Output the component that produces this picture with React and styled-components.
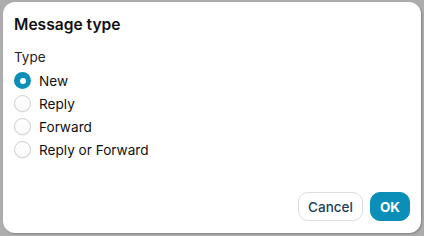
import React, { useState } from "react";
import styled, { createGlobalStyle } from "styled-components";

const Global = createGlobalStyle`
  html, body { margin: 0; padding: 0; }
  body { background: #adadad; font-family: Inter, "Noto Sans", sans-serif; }
  #root { width: 424px; height: 236px; }
`;

const Page = styled.div`
  width: 424px;
  height: 236px;
  box-sizing: border-box;
  padding: 2px 3px 3px 3px;
  display: flex;
`;

const Dialog = styled.div`
  flex: 1;
  background: #fff;
  border-radius: 12px;
  box-shadow: 1px 1px 2px rgba(0,0,0,0.25);
  display: flex;
  flex-direction: column;
  padding: 13px 11px 12px 11px;
  box-sizing: border-box;
`;

const Title = styled.h1`
  margin: 0;
  font-size: 15.6px;
  font-weight: 600;
  color: #111;
  line-height: 20px;
`;

const Body = styled.div`
  flex: 1;
  display: flex;
  flex-direction: column;
  margin-top: 14px;
`;

const Label = styled.div`
  font-size: 13.5px;
  color: #222;
  line-height: 17px;
  margin-bottom: 3px;
`;

const Option = styled.label`
  display: flex;
  align-items: center;
  gap: 8px;
  height: 23px;
  font-size: 13.6px;
  color: #111;
  cursor: pointer;
`;

const Circle = styled.span`
  width: 17px;
  height: 17px;
  border-radius: 50%;
  box-sizing: border-box;
  flex: none;
  background: ${(p) => (p.$on ? "#0b8fb8" : "linear-gradient(#fff, #fafafa)")};
  border: ${(p) => (p.$on ? "none" : "1px solid #cdcdcd")};
  box-shadow: ${(p) => (p.$on ? "none" : "0 1px 1px rgba(0,0,0,0.06)")};
  display: flex;
  align-items: center;
  justify-content: center;
  &::after {
    content: "";
    width: 6px;
    height: 6px;
    border-radius: 50%;
    background: #fff;
    display: ${(p) => (p.$on ? "block" : "none")};
  }
`;

const Footer = styled.div`
  display: flex;
  justify-content: flex-end;
  gap: 7px;
`;

const Button = styled.button`
  height: 29px;
  border-radius: 10px;
  font-family: inherit;
  font-size: 13.5px;
  padding: 0 9px;
  border: 1px solid ${(p) => (p.$primary ? "#0b8fb8" : "#d8dee2")};
  background: ${(p) => (p.$primary ? "#0b8fb8" : "#fff")};
  color: ${(p) => (p.$primary ? "#fff" : "#1d3d5c")};
  font-weight: ${(p) => (p.$primary ? 700 : 500)};
  cursor: pointer;
`;

const options = ["New", "Reply", "Forward", "Reply or Forward"];

export default function App() {
  const [sel, setSel] = useState("New");
  return (
    <>
      <Global />
      <Page>
        <Dialog>
          <Title>Message type</Title>
          <Body>
            <Label>Type</Label>
            {options.map((o) => (
              <Option key={o} onClick={() => setSel(o)}>
                <Circle $on={sel === o} />
                {o}
              </Option>
            ))}
          </Body>
          <Footer>
            <Button>Cancel</Button>
            <Button $primary>OK</Button>
          </Footer>
        </Dialog>
      </Page>
    </>
  );
}
